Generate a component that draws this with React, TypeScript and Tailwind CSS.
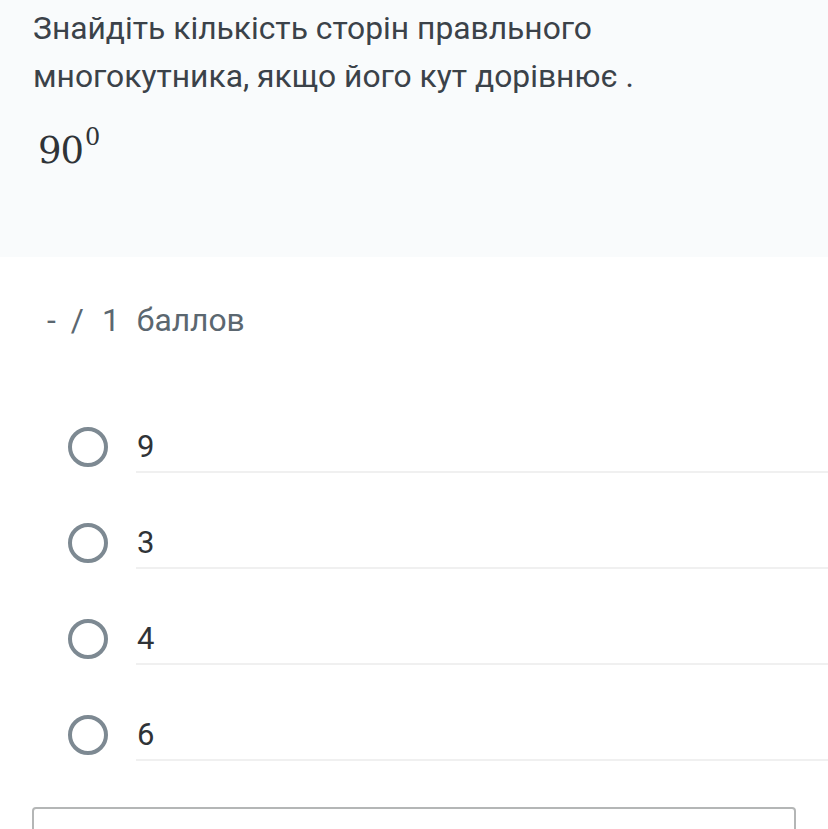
import React from 'react';

const OPTIONS = ['9', '3', '4', '6'];

const OptionRow = ({ label }: { label: string }) => {
  return (
    <div className="flex items-center">
      {/* Radio */}
      <div className="w-[136px] flex items-center">
        <div className="ml-[68px] w-[40px] h-[40px] rounded-full border-[4px] border-[#7d8992]" />
      </div>
      {/* Label */}
      <div className="flex-1 h-[52px] flex items-center border-b-2 border-[#f0f0f0]">
        <span className="ml-px text-[31px] leading-none text-[#2f3337]">{label}</span>
      </div>
    </div>
  );
};

export default function App() {
  return (
    <div className="w-[828px] h-[829px] overflow-hidden bg-white font-['Roboto',sans-serif]">
      {/* Question */}
      <div className="h-[257px] bg-[#f9fbfc] pl-[33px] pt-[4px]">
        <p className="text-[31.8px] leading-[48px] text-[#3b4249]">
          Знайдіть кількість сторін правльного
          <br />
          многокутника, якщо його кут дорівнює .
        </p>
        <div className="mt-[29px] ml-[5px] flex items-start font-['DejaVu_Serif',serif] not-italic font-normal text-[#2f3337]">
          <span className="text-[37px] leading-[44px] tracking-[-1px]">90</span>
          <span className="text-[24px] leading-[24px] ml-[2px] -mt-[4px]">0</span>
        </div>
      </div>

      {/* Score */}
      <div className="mt-[39px] pl-[47px] flex items-center text-[31.8px] leading-[48px] text-[#5b6770]">
        <span>-</span>
        <span className="ml-[15px]">/</span>
        <span className="ml-[18px]">1</span>
        <span className="ml-[17px]">баллов</span>
      </div>

      {/* Options */}
      <div className="mt-[77px] flex flex-col gap-[44px]">
        {OPTIONS.map((o) => (
          <OptionRow key={o} label={o} />
        ))}
      </div>

      {/* Answer box */}
      <div className="mt-[46px] ml-[32px] w-[764px] h-[80px] border-2 border-[#b4b6b6] rounded-[4px]" />
    </div>
  );
}
